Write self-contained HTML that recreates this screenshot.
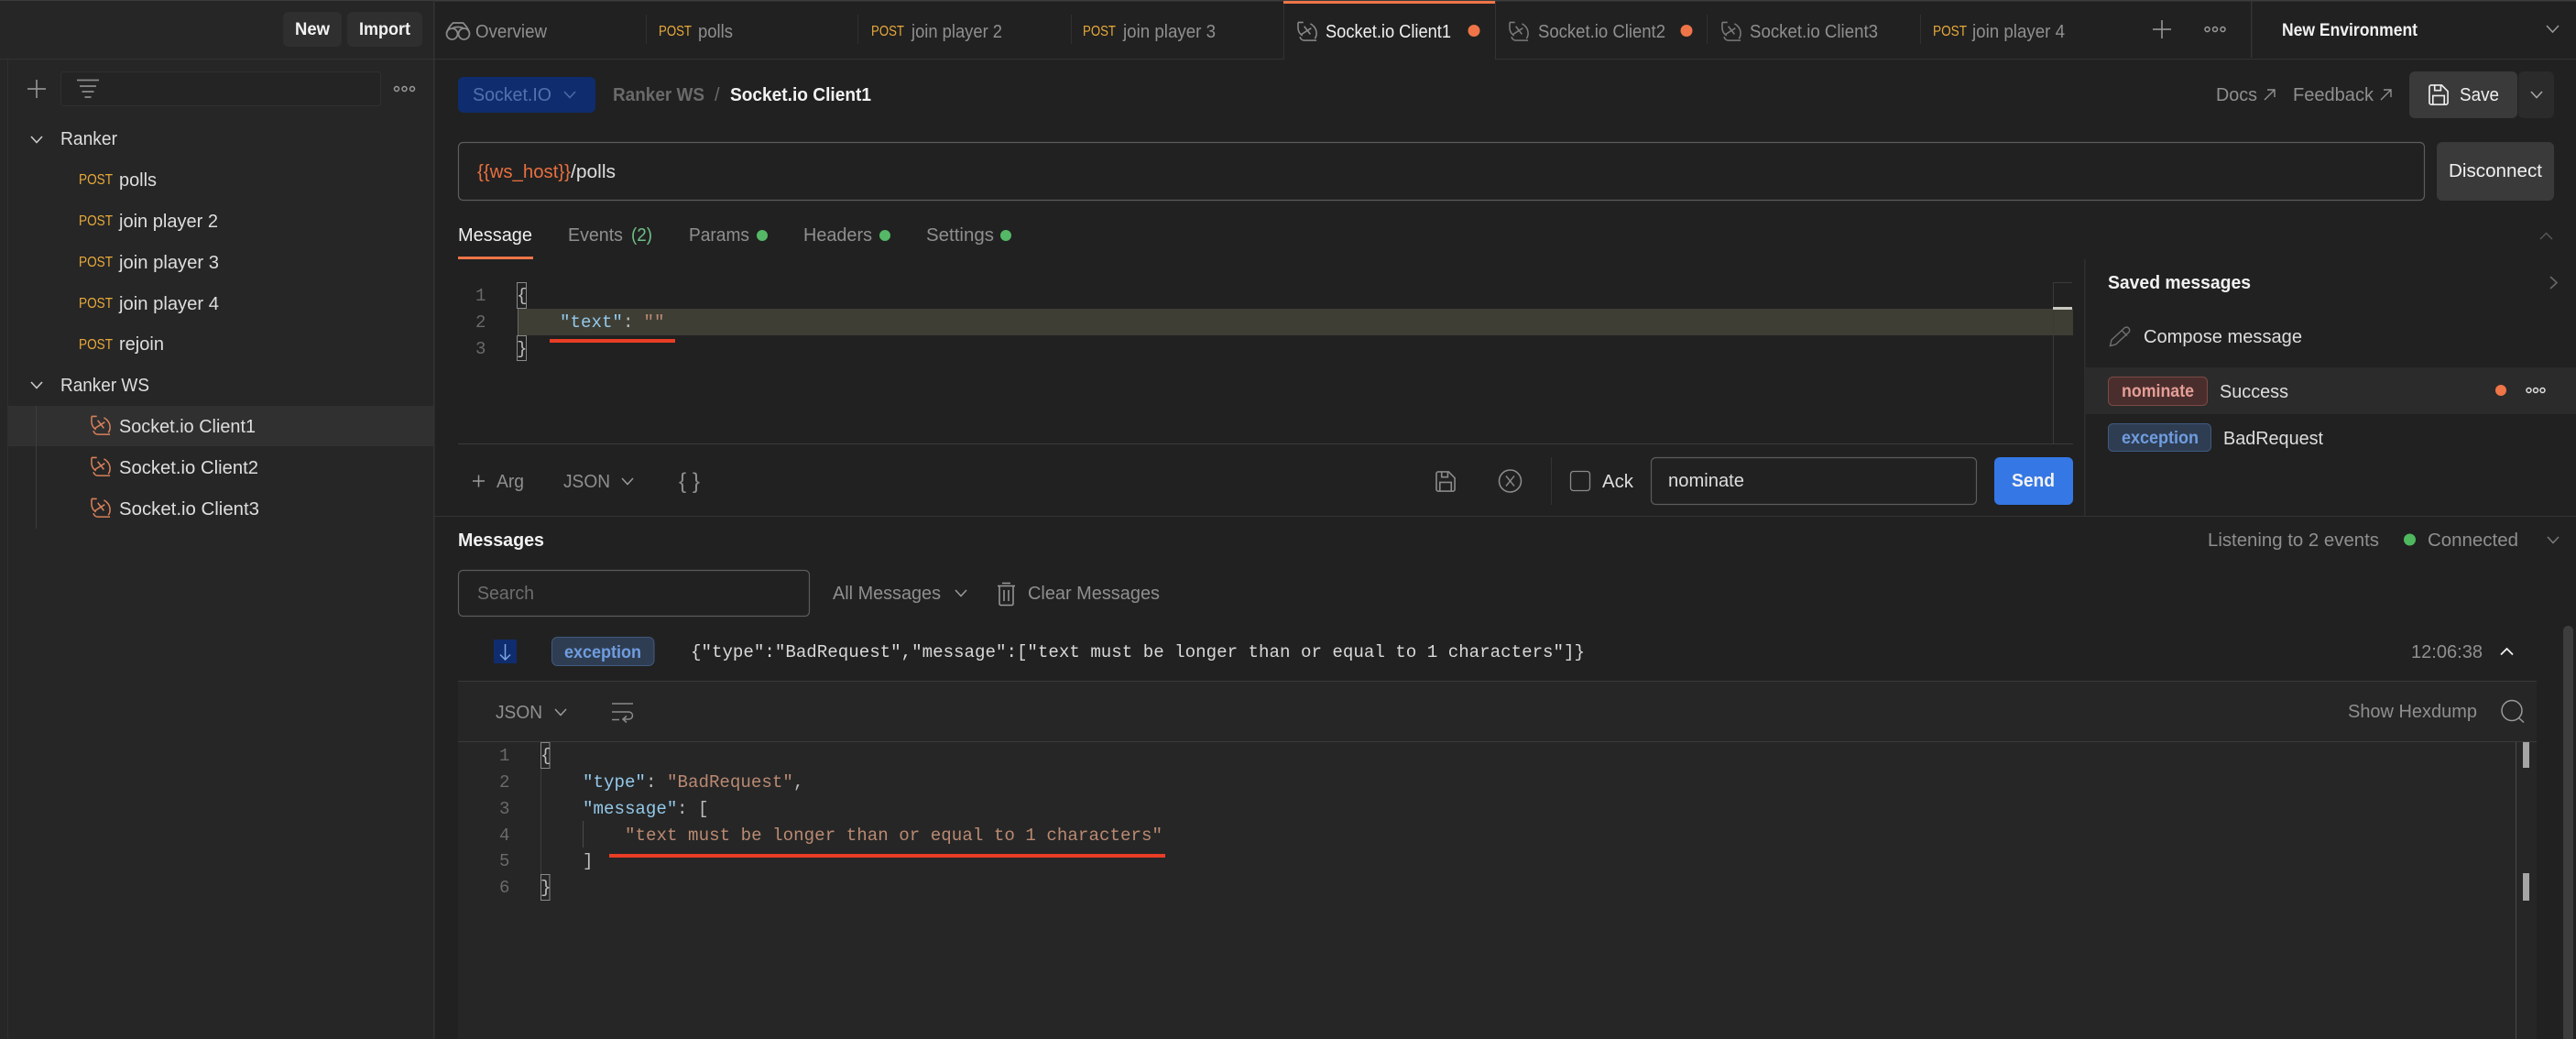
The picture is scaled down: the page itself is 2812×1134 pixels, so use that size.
<!DOCTYPE html>
<html lang="en"><head><meta charset="utf-8"><title>Socket.io Client1</title>
<style>
html,body{margin:0;padding:0;background:#212121;width:2812px;height:1134px;overflow:hidden}
svg{display:block}
text{font-family:"Liberation Sans",sans-serif;font-size:20px;fill:#9a9a9a;white-space:pre}
.w{fill:#f0f0f0}.l{fill:#dedede}.d{fill:#8f8f8f}.b{font-weight:bold;fill:#f2f2f2}
.p{font-size:16px;fill:#e8a93a}
.m{font-family:"Liberation Mono",monospace;font-size:19.15px}
.k{fill:#93c9ea}.s{fill:#ba8a72}.n{fill:#6a6a6a;font-size:19px}
.ic{fill:none;stroke-width:1.6}
</style></head><body>
<svg xmlns="http://www.w3.org/2000/svg" width="2812" height="1134" viewBox="0 0 2812 1134">
<defs>
<symbol id="sock" viewBox="0 0 24 24" overflow="visible"><path fill="none" stroke-width="1.6" d="M1 1.500h6M1 1.500v6c0 4 2 7 5 9M15 3c4 2 7 6 7 11 0 3-1 5-2 6M3 18c1 2 2 4 5 4h14M5 15L16 8M8 6l7 9"/></symbol>
<symbol id="floppy" viewBox="0 0 24 24" overflow="visible"><path fill="none" stroke-width="1.7" d="M1 3a2 2 0 0 1 2-2h12l7 7v13a2 2 0 0 1-2 2H3a2 2 0 0 1-2-2zM7 1v6h7V1M5 23V13h13v10"/></symbol>
</defs>
<rect width="2812" height="1134" fill="#212121"/>
<rect x="0" y="0" width="2812" height="1.500" fill="#3c3c3c"/>

<!-- sidebar -->
<rect x="0" y="1" width="473" height="1133" fill="#262626"/>
<rect x="8" y="64" width="1" height="1070" fill="#303030"/>
<rect x="473" y="0" width="1.500" height="1134" fill="#333"/>
<rect x="0" y="64" width="2812" height="1" fill="#333"/>
<rect x="309" y="13" width="64" height="38" rx="6" fill="#2f2f2f"/>
<rect x="379" y="13" width="82" height="38" rx="6" fill="#2f2f2f"/>
<text x="322" y="38" textLength="38" lengthAdjust="spacingAndGlyphs" class="b" style="font-size:19px">New</text>
<text x="392" y="38" textLength="56" lengthAdjust="spacingAndGlyphs" class="b" style="font-size:19px">Import</text>
<path d="M30 97h20M40 87v20" stroke="#8f8f8f" stroke-width="1.700" fill="none"/>
<rect x="66.500" y="78.500" width="349" height="37" rx="3" fill="#242424" stroke="#303030"/>
<path d="M84 87.500h24M87 94h18M89.500 100h13M92.500 106h7" stroke="#8a8a8a" stroke-width="1.700" fill="none"/>
<g fill="none" stroke="#9a9a9a" stroke-width="1.500"><circle cx="433" cy="97" r="2.500"/><circle cx="441.500" cy="97" r="2.500"/><circle cx="450" cy="97" r="2.500"/></g>
<path d="M34 149l6 6.500 6-6.500" fill="none" stroke="#ccc" stroke-width="1.600"/>
<text x="66" y="158" textLength="62" lengthAdjust="spacingAndGlyphs" class="l">Ranker</text>
<text x="86" y="201" textLength="37" lengthAdjust="spacingAndGlyphs" class="p">POST</text><text x="130" y="203" textLength="41" lengthAdjust="spacingAndGlyphs" class="l">polls</text>
<text x="86" y="246" textLength="37" lengthAdjust="spacingAndGlyphs" class="p">POST</text><text x="130" y="248" textLength="108" lengthAdjust="spacingAndGlyphs" class="l">join player 2</text>
<text x="86" y="291" textLength="37" lengthAdjust="spacingAndGlyphs" class="p">POST</text><text x="130" y="293" textLength="109" lengthAdjust="spacingAndGlyphs" class="l">join player 3</text>
<text x="86" y="336" textLength="37" lengthAdjust="spacingAndGlyphs" class="p">POST</text><text x="130" y="338" textLength="109" lengthAdjust="spacingAndGlyphs" class="l">join player 4</text>
<text x="86" y="381" textLength="37" lengthAdjust="spacingAndGlyphs" class="p">POST</text><text x="130" y="382" textLength="49" lengthAdjust="spacingAndGlyphs" class="l">rejoin</text>
<path d="M34 417l6 6.500 6-6.500" fill="none" stroke="#ccc" stroke-width="1.600"/>
<text x="66" y="427" textLength="97" lengthAdjust="spacingAndGlyphs" class="l">Ranker WS</text>
<rect x="9" y="443" width="464" height="44" fill="#303030"/>
<rect x="39" y="443" width="1" height="134" fill="#3c3c3c"/>
<use href="#sock" x="99" y="453" width="23" height="23" stroke="#d9805a"/>
<text x="130" y="472" textLength="149" lengthAdjust="spacingAndGlyphs" class="l">Socket.io Client1</text>
<use href="#sock" x="99" y="498" width="23" height="23" stroke="#d9805a"/>
<text x="130" y="517" textLength="152" lengthAdjust="spacingAndGlyphs" class="l">Socket.io Client2</text>
<use href="#sock" x="99" y="543" width="23" height="23" stroke="#d9805a"/>
<text x="130" y="562" textLength="153" lengthAdjust="spacingAndGlyphs" class="l">Socket.io Client3</text>

<!-- tab bar -->
<g fill="none" stroke="#8a8a8a" stroke-width="1.700"><circle cx="493.500" cy="37" r="6"/><circle cx="506.500" cy="37" r="6"/><path d="M487.500 36c1-4 4-8 7-11h11c3 3 6 7 7 11M494 31c2-2 10-2 12 0"/></g>
<text x="519" y="41" textLength="78" lengthAdjust="spacingAndGlyphs" class="d">Overview</text>
<g fill="#303030"><rect x="705" y="16" width="1" height="32"/><rect x="936" y="16" width="1" height="32"/><rect x="1169" y="16" width="1" height="32"/><rect x="1863" y="16" width="1" height="32"/><rect x="2096" y="16" width="1" height="32"/></g>
<text x="719" y="39" textLength="36" lengthAdjust="spacingAndGlyphs" class="p">POST</text><text x="762" y="41" textLength="38" lengthAdjust="spacingAndGlyphs" class="d">polls</text>
<text x="951" y="39" textLength="36" lengthAdjust="spacingAndGlyphs" class="p">POST</text><text x="995" y="41" textLength="99" lengthAdjust="spacingAndGlyphs" class="d">join player 2</text>
<text x="1182" y="39" textLength="36" lengthAdjust="spacingAndGlyphs" class="p">POST</text><text x="1226" y="41" textLength="101" lengthAdjust="spacingAndGlyphs" class="d">join player 3</text>
<rect x="1401" y="1" width="231" height="64.500" fill="#212121"/>
<rect x="1401" y="1" width="1" height="64" fill="#333"/><rect x="1632" y="1" width="1" height="64" fill="#333"/>
<rect x="1401" y="1" width="231" height="3" fill="#ef7548"/>
<use href="#sock" x="1416" y="23" width="23" height="23" stroke="#8a8a8a"/>
<text x="1447" y="41" textLength="137" lengthAdjust="spacingAndGlyphs" class="w">Socket.io Client1</text>
<circle cx="1609" cy="33.500" r="6.500" fill="#ef7548"/>
<use href="#sock" x="1647" y="23" width="23" height="23" stroke="#7a7a7a"/>
<text x="1679" y="41" textLength="139" lengthAdjust="spacingAndGlyphs" class="d">Socket.io Client2</text>
<circle cx="1841" cy="33.500" r="6.500" fill="#ef7548"/>
<use href="#sock" x="1879" y="23" width="23" height="23" stroke="#7a7a7a"/>
<text x="1910" y="41" textLength="140" lengthAdjust="spacingAndGlyphs" class="d">Socket.io Client3</text>
<text x="2110" y="39" textLength="37" lengthAdjust="spacingAndGlyphs" class="p">POST</text><text x="2153" y="41" textLength="101" lengthAdjust="spacingAndGlyphs" class="d">join player 4</text>
<path d="M2350 32h20M2360 22v20" stroke="#8f8f8f" stroke-width="1.700" fill="none"/>
<g fill="none" stroke="#9a9a9a" stroke-width="1.500"><circle cx="2409.500" cy="32" r="2.500"/><circle cx="2418" cy="32" r="2.500"/><circle cx="2426.500" cy="32" r="2.500"/></g>
<rect x="2457" y="1" width="1.500" height="62" fill="#333"/>
<text x="2491" y="39" textLength="148" lengthAdjust="spacingAndGlyphs" class="b" style="font-size:19px">New Environment</text>
<path d="M2780 28l6.500 7 6.500-7" fill="none" stroke="#9a9a9a" stroke-width="1.500"/>

<!-- request header -->
<rect x="500" y="84" width="150" height="39" rx="6" fill="#0f2d6e"/>
<text x="516" y="110" textLength="86" lengthAdjust="spacingAndGlyphs" style="fill:#5470ad">Socket.IO</text>
<path d="M616 100l6 6.500 6-6.500" fill="none" stroke="#4d69a6" stroke-width="1.500"/>
<text x="669" y="110" textLength="100" lengthAdjust="spacingAndGlyphs" style="fill:#6a6a6a;font-weight:bold">Ranker WS</text>
<text x="780" y="110" style="fill:#6a6a6a">/</text>
<text x="797" y="110" textLength="154" lengthAdjust="spacingAndGlyphs" class="b">Socket.io Client1</text>
<text x="2419" y="110" textLength="45" lengthAdjust="spacingAndGlyphs" class="d">Docs</text>
<path d="M2472 109l11-11M2475 98h8v8" fill="none" stroke="#8f8f8f" stroke-width="1.400"/>
<text x="2503" y="110" textLength="88" lengthAdjust="spacingAndGlyphs" class="d">Feedback</text>
<path d="M2599 109l11-11M2602 98h8v8" fill="none" stroke="#8f8f8f" stroke-width="1.400"/>
<rect x="2630" y="78" width="118" height="51" rx="6" fill="#3a3a3a"/>
<rect x="2749" y="78" width="39" height="51" rx="6" fill="#2b2b2b"/>
<use href="#floppy" x="2651" y="92" width="23" height="23" stroke="#f0f0f0"/>
<text x="2685" y="110" textLength="43" lengthAdjust="spacingAndGlyphs" class="w">Save</text>
<path d="M2763 100l6 6.500 6-6.500" fill="none" stroke="#aaa" stroke-width="1.500"/>
<rect x="500.500" y="155.500" width="2146" height="63" rx="5" fill="none" stroke="#5c5c5c" stroke-width="1.200"/>
<text x="521" y="194" textLength="102" lengthAdjust="spacingAndGlyphs" style="fill:#e8703f">{{ws_host}}</text>
<text x="623" y="194" textLength="49" lengthAdjust="spacingAndGlyphs" class="l">/polls</text>
<rect x="2660" y="155" width="128" height="64" rx="6" fill="#3a3a3a"/>
<text x="2673" y="193" textLength="102" lengthAdjust="spacingAndGlyphs" class="w">Disconnect</text>

<!-- request tabs -->
<text x="500" y="263" textLength="81" lengthAdjust="spacingAndGlyphs" class="w">Message</text>
<rect x="500" y="280" width="82" height="3" fill="#ef7548"/>
<text x="620" y="263" textLength="60" lengthAdjust="spacingAndGlyphs" class="d">Events</text>
<text x="689" y="263" textLength="23" lengthAdjust="spacingAndGlyphs" style="fill:#6fbf85">(2)</text>
<text x="752" y="263" textLength="66" lengthAdjust="spacingAndGlyphs" class="d">Params</text><circle cx="832" cy="257" r="6" fill="#55b866"/>
<text x="877" y="263" textLength="75" lengthAdjust="spacingAndGlyphs" class="d">Headers</text><circle cx="966" cy="257" r="6" fill="#55b866"/>
<text x="1011" y="263" textLength="74" lengthAdjust="spacingAndGlyphs" class="d">Settings</text><circle cx="1098" cy="257" r="6" fill="#55b866"/>
<path d="M2773 261l6.500-6.500 6.500 6.500" fill="none" stroke="#555" stroke-width="1.500"/>

<!-- editor -->
<text x="519" y="328" class="m n">1</text><text x="519" y="357" class="m n">2</text><text x="519" y="386" class="m n">3</text>
<rect x="566" y="337" width="1697" height="29" fill="#3e3e35"/>
<rect x="565" y="337" width="1" height="29" fill="#6a6a6a"/>
<rect x="564.500" y="308.500" width="10" height="28" fill="none" stroke="#8a8a8a"/>
<rect x="564.500" y="366.500" width="10" height="27" fill="none" stroke="#8a8a8a"/>
<text x="564" y="328" class="m" style="fill:#bdbdbd">{</text>
<text x="564" y="386" class="m" style="fill:#bdbdbd">}</text>
<text x="611" y="357" class="m k">"text"</text><text x="680" y="357" class="m" style="fill:#bdbdbd">:</text><text x="702.500" y="357" class="m s">""</text>
<rect x="600" y="370" width="137" height="4" fill="#e93d26"/>
<rect x="2241" y="308" width="1" height="176" fill="#3a3a3a"/><rect x="2241" y="308" width="21" height="1" fill="#3a3a3a"/>
<rect x="2241" y="335" width="21" height="3" fill="#c8c8c0"/>
<rect x="500" y="484" width="1763" height="1" fill="#3a3a3a"/>
<rect x="2275" y="283" width="1.500" height="280" fill="#2e2e2e"/>
<rect x="473" y="563" width="2339" height="1" fill="#333"/>

<!-- editor toolbar -->
<path d="M516 525h13M522.500 518.500v13" stroke="#9a9a9a" stroke-width="1.500" fill="none"/>
<text x="542" y="532" textLength="30" lengthAdjust="spacingAndGlyphs" class="d">Arg</text>
<text x="615" y="532" textLength="51" lengthAdjust="spacingAndGlyphs" class="d">JSON</text>
<path d="M679 522l6 6.500 6-6.500" fill="none" stroke="#9a9a9a" stroke-width="1.500"/>
<text x="741" y="533" textLength="23" lengthAdjust="spacingAndGlyphs" class="d" style="font-size:24px">{ }</text>
<use href="#floppy" x="1567" y="514" width="23" height="23" stroke="#8a8a8a"/>
<circle cx="1648.500" cy="525" r="12" fill="none" stroke="#8a8a8a" stroke-width="1.600"/>
<path d="M1644 519.500l9 11M1653 519.500l-9 11" stroke="#8a8a8a" stroke-width="1.400" fill="none"/>
<rect x="1693" y="499" width="1" height="52" fill="#333"/>
<rect x="1714.500" y="514.500" width="21" height="21" rx="3" fill="none" stroke="#8a8a8a" stroke-width="1.300"/>
<text x="1749" y="532" textLength="34" lengthAdjust="spacingAndGlyphs" class="l">Ack</text>
<rect x="1802.500" y="499.500" width="355" height="51" rx="5" fill="none" stroke="#5c5c5c" stroke-width="1.200"/>
<text x="1821" y="531" textLength="83" lengthAdjust="spacingAndGlyphs" class="l">nominate</text>
<rect x="2177" y="499" width="86" height="52" rx="6" fill="#3577e5"/>
<text x="2196" y="531" textLength="47" lengthAdjust="spacingAndGlyphs" class="b">Send</text>

<!-- saved messages -->
<text x="2301" y="315" textLength="156" lengthAdjust="spacingAndGlyphs" class="b">Saved messages</text>
<path d="M2784 302l7 6.500-7 6.500" fill="none" stroke="#666" stroke-width="1.700"/>
<path d="M2303.500 377.500l1.500-6.500 14-13c1.500-1.500 4-1 5 .5s1 3.500-.5 4.500l-14 13zM2316 360.500l6 6" fill="none" stroke="#6e6e6e" stroke-width="1.500"/>
<text x="2340" y="374" textLength="173" lengthAdjust="spacingAndGlyphs" class="l">Compose message</text>
<rect x="2276" y="401" width="536" height="51" fill="#2b2b2b"/>
<rect x="2301.500" y="411.500" width="108" height="31" rx="5" fill="#4a2e2d" stroke="#7c4a45"/>
<text x="2316" y="433" textLength="79" lengthAdjust="spacingAndGlyphs" style="fill:#e49e96;font-weight:bold;font-size:19px">nominate</text>
<text x="2423" y="434" textLength="75" lengthAdjust="spacingAndGlyphs" class="l">Success</text>
<circle cx="2730" cy="426" r="6" fill="#ef7548"/>
<g fill="none" stroke="#e0e0e0" stroke-width="1.500"><circle cx="2760.500" cy="426" r="2.500"/><circle cx="2768" cy="426" r="2.500"/><circle cx="2775.500" cy="426" r="2.500"/></g>
<rect x="2301.500" y="462.500" width="112" height="30" rx="5" fill="#2f3d52" stroke="#405a80"/>
<text x="2316" y="484" textLength="84" lengthAdjust="spacingAndGlyphs" style="fill:#6f9de0;font-weight:bold;font-size:19px">exception</text>
<text x="2427" y="485" textLength="109" lengthAdjust="spacingAndGlyphs" class="l">BadRequest</text>

<!-- messages -->
<text x="500" y="596" textLength="94" lengthAdjust="spacingAndGlyphs" class="b">Messages</text>
<text x="2410" y="596" textLength="187" lengthAdjust="spacingAndGlyphs" class="d">Listening to 2 events</text>
<circle cx="2630.500" cy="589" r="6.500" fill="#4fb85f"/>
<text x="2650" y="596" textLength="99" lengthAdjust="spacingAndGlyphs" class="d">Connected</text>
<path d="M2781 586l6 6.500 6-6.500" fill="none" stroke="#7a7a7a" stroke-width="1.500"/>
<rect x="500.500" y="622.500" width="383" height="50" rx="5" fill="none" stroke="#5c5c5c" stroke-width="1.200"/>
<text x="521" y="654" textLength="62" lengthAdjust="spacingAndGlyphs" style="fill:#6e6e6e">Search</text>
<text x="909" y="654" textLength="118" lengthAdjust="spacingAndGlyphs" class="d">All Messages</text>
<path d="M1043 644l6 6.500 6-6.500" fill="none" stroke="#9a9a9a" stroke-width="1.500"/>
<path d="M1089 639.500h19M1094 636.500h9M1091 640v19a1.500 1.500 0 0 0 1.500 1.500h12a1.500 1.500 0 0 0 1.500-1.500v-19M1096 644v12M1101 644v12" fill="none" stroke="#9a9a9a" stroke-width="1.500"/>
<text x="1122" y="654" textLength="144" lengthAdjust="spacingAndGlyphs" class="d">Clear Messages</text>

<rect x="539" y="698" width="25" height="26" fill="#0f2d6e"/>
<path d="M551.500 703v17M546 714.500l5.500 5.500 5.500-5.500" fill="none" stroke="#7aa5e6" stroke-width="1.500"/>
<rect x="602.500" y="695.500" width="111.500" height="31" rx="6" fill="#2f3d52" stroke="#405a80"/>
<text x="616" y="718" textLength="84" lengthAdjust="spacingAndGlyphs" style="fill:#6f9de0;font-weight:bold;font-size:19px">exception</text>
<text x="754" y="717" textLength="976" lengthAdjust="spacing" class="m" style="fill:#d8d8d8">{"type":"BadRequest","message":["text must be longer than or equal to 1 characters"]}</text>
<text x="2632" y="718" textLength="78" lengthAdjust="spacingAndGlyphs" class="d">12:06:38</text>
<path d="M2730 714.500l6.500-6.500 6.500 6.500" fill="none" stroke="#f0f0f0" stroke-width="1.800"/>

<!-- detail panel -->
<rect x="500" y="743" width="2269" height="391" fill="#262626"/>
<rect x="500" y="743" width="2269" height="1" fill="#3a3a3a"/>
<rect x="500" y="809" width="2269" height="1" fill="#3a3a3a"/>
<text x="541" y="784" textLength="51" lengthAdjust="spacingAndGlyphs" class="d">JSON</text>
<path d="M606 774l6 6.500 6-6.500" fill="none" stroke="#9a9a9a" stroke-width="1.500"/>
<path d="M668 768h23M668 777h18c6 0 6 8 0 8h-5M684 781.500l-4 3.500 4 3.500M668 785.500h8" fill="none" stroke="#8a8a8a" stroke-width="1.500"/>
<text x="2563" y="783" textLength="141" lengthAdjust="spacingAndGlyphs" class="d">Show Hexdump</text>
<circle cx="2742" cy="775.500" r="11" fill="none" stroke="#9a9a9a" stroke-width="1.500"/>
<path d="M2749.500 783.500l5.500 5" stroke="#9a9a9a" stroke-width="1.500" fill="none"/>
<text x="545" y="830" class="m n">1</text><text x="545" y="859" class="m n">2</text><text x="545" y="888" class="m n">3</text><text x="545" y="917" class="m n">4</text><text x="545" y="945" class="m n">5</text><text x="545" y="974" class="m n">6</text>
<rect x="590" y="839" width="1" height="115" fill="#3c3c3c"/>
<rect x="636" y="896" width="1" height="29" fill="#4a4a4a"/>
<rect x="590.500" y="810.500" width="9.500" height="28" fill="none" stroke="#8a8a8a"/>
<rect x="590.500" y="954.500" width="9.500" height="28" fill="none" stroke="#8a8a8a"/>
<text x="590" y="830" class="m" style="fill:#bdbdbd">{</text>
<text x="636" y="859" class="m k">"type"</text><text x="705" y="859" class="m" style="fill:#bdbdbd">:</text><text x="728" y="859" class="m s">"BadRequest"</text><text x="866" y="859" class="m" style="fill:#bdbdbd">,</text>
<text x="636" y="888" class="m k">"message"</text><text x="739" y="888" class="m" style="fill:#bdbdbd">: [</text>
<text x="682" y="917" textLength="587" lengthAdjust="spacing" class="m s">"text must be longer than or equal to 1 characters"</text>
<text x="636" y="945" class="m" style="fill:#bdbdbd">]</text>
<text x="590" y="974" class="m" style="fill:#bdbdbd">}</text>
<rect x="665" y="932" width="607" height="4" fill="#e93d26"/>
<rect x="2746" y="810" width="1" height="324" fill="#4a4a4a"/>
<rect x="2754" y="810" width="7" height="28" fill="#a5a5a5"/>
<rect x="2754" y="953" width="7" height="30" fill="#a5a5a5"/>
<rect x="2798" y="683" width="11" height="470" rx="5.500" fill="#3d3d3d"/>
</svg>
</body></html>
